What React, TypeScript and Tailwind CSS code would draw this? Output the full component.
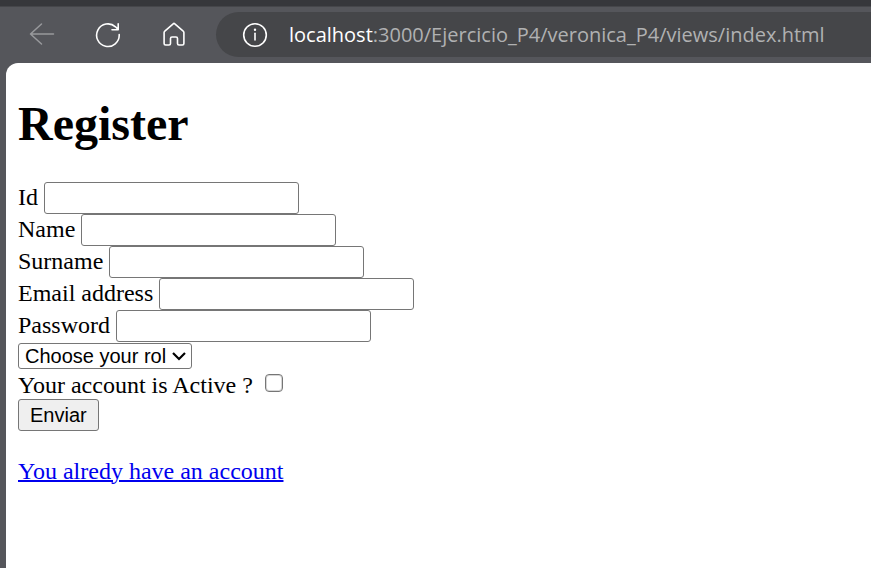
import React from "react";

const fields = [
  { id: "id", label: "Id", type: "text" },
  { id: "name", label: "Name", type: "text" },
  { id: "surname", label: "Surname", type: "text" },
  { id: "email", label: "Email address", type: "email" },
  { id: "password", label: "Password", type: "password" },
];

function Toolbar() {
  return (
    <header className="border-t-6 border-[#36373b] bg-[#55565b] shadow-[inset_0_1px_0_#45464a]">
      <div className="flex h-[57px] items-center pl-[29px]">
        <nav className="flex gap-10" aria-label="Browser">
          <button type="button" aria-label="Back" className="text-[#98999c]">
            <svg width="26" height="26" viewBox="0 0 26 26" fill="none" stroke="currentColor" strokeWidth="1.5" strokeLinecap="round" strokeLinejoin="round">
              <path d="M12.5 2 1.5 12 12.5 22M1.5 12H24.5" />
            </svg>
          </button>
          <button type="button" aria-label="Reload" className="text-white">
            <svg width="26" height="26" viewBox="0 0 26 26" fill="none" stroke="currentColor" strokeWidth="1.6" strokeLinecap="round" strokeLinejoin="round">
              <path d="M24.2 12.6A11.3 11.3 0 1 1 20.5 4.8L23 7.4M23.2 1.7V7.8H17" />
            </svg>
          </button>
          <button type="button" aria-label="Home" className="text-white">
            <svg width="26" height="26" viewBox="0 0 26 26" fill="none" stroke="currentColor" strokeWidth="1.6" strokeLinecap="round" strokeLinejoin="round">
              <path d="M12.2 1.8a1.2 1.2 0 0 1 1.6 0L22.2 9.2a1.8 1.8 0 0 1 .7 1.4V21.5a1.5 1.5 0 0 1-1.5 1.5H18a1.5 1.5 0 0 1-1.5-1.5V16.5a1.5 1.5 0 0 0-1.5-1.5H11A1.5 1.5 0 0 0 9.5 16.5V21.5a1.5 1.5 0 0 1-1.5 1.5H4.6A1.5 1.5 0 0 1 3.1 21.5V10.6a1.8 1.8 0 0 1 .7-1.4Z" />
            </svg>
          </button>
        </nav>
        <div className="ml-[29px] flex h-[45px] min-w-0 flex-1 items-center gap-[21px] rounded-l-full bg-[#454649] pl-[26px]">
          <svg className="shrink-0 text-white" width="26" height="26" viewBox="0 0 26 26" fill="none" stroke="currentColor" strokeWidth="1.6">
            <circle cx="13" cy="13" r="11.3" />
            <path d="M13 11.3V18" strokeLinecap="round" />
            <circle cx="13" cy="7.8" r="1.2" fill="currentColor" stroke="none" />
          </svg>
          <p className="truncate font-['Open_Sans','Noto_Sans',sans-serif] text-[20px] leading-7 text-[#b0b1b2]">
            <span className="text-white">localhost</span>:3000/Ejercicio_P4/veronica_P4/views/index.html
          </p>
        </div>
      </div>
    </header>
  );
}

export default function App() {
  return (
    <div className="flex min-h-screen flex-col bg-[#55565b]">
      <Toolbar />
      <main className="ml-1.5 flex-1 rounded-tl-xl bg-white px-3 pt-8 pb-8 font-['Liberation_Serif',serif] text-2xl leading-7 text-black">
        <h1 className="mb-[30px] text-5xl leading-[57px] font-bold">Register</h1>
        <form className="flex flex-col items-start" onSubmit={(e) => e.preventDefault()}>
          {fields.map((f) => (
            <div key={f.id} className="flex h-8 items-start gap-1.5">
              <label htmlFor={f.id} className="leading-[30px]">{f.label}</label>
              <input
                id={f.id}
                type={f.type}
                className="h-8 w-[255px] rounded-[3px] border border-[#767676] bg-white px-1 font-['Liberation_Sans',sans-serif] text-xl"
              />
            </div>
          ))}
          <div className="relative mt-px flex items-center">
            <select
              aria-label="Choose your rol"
              defaultValue=""
              className="h-[26px] w-[174px] appearance-none rounded-[3px] border border-[#767676] bg-white pl-1.5 font-['Liberation_Sans',sans-serif] text-xl leading-6"
            >
              <option value="">Choose your rol</option>
            </select>
            <svg className="pointer-events-none absolute right-1.5" width="14" height="10" viewBox="0 0 14 10" fill="none" stroke="black" strokeWidth="2.2">
              <path d="M1 2 7 8 13 2" />
            </svg>
          </div>
          <div className="mt-0.5 flex h-7 items-center gap-3">
            <label htmlFor="active">Your account is Active ?</label>
            <input
              id="active"
              type="checkbox"
              className="mb-1 size-[18px] appearance-none rounded-[4px] border border-[#767676] bg-white ring-1 ring-[#767676]/30 ring-inset checked:bg-[#0075ff]"
            />
          </div>
          <button
            type="submit"
            className="h-8 rounded-[3px] border border-[#767676] bg-[#efefef] px-[11px] font-['Liberation_Sans',sans-serif] text-xl leading-7"
          >
            Enviar
          </button>
        </form>
        <a href="#login" className="mt-[26px] inline-block text-[#0000ee] underline decoration-2">
          You alredy have an account
        </a>
      </main>
    </div>
  );
}
